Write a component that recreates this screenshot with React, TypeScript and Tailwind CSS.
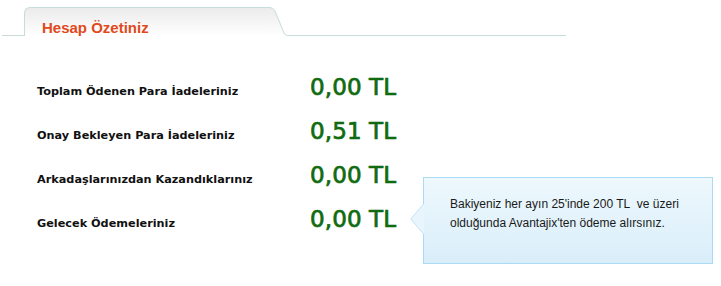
import React from "react";

const rows = [
  { label: "Toplam Ödenen Para İadeleriniz", value: "0,00 TL" },
  { label: "Onay Bekleyen Para İadeleriniz", value: "0,51 TL" },
  { label: "Arkadaşlarınızdan Kazandıklarınız", value: "0,00 TL" },
  { label: "Gelecek Ödemeleriniz", value: "0,00 TL" },
];

export default function App() {
  return (
    <div className="relative w-[721px] h-[286px] bg-white overflow-hidden">
      {/* Tab header */}
      <div className="flex h-[36px] w-[566px] items-end pl-[2px]">
        <div className="h-full w-[22px] border-b border-[#c9dcdc]" />
        <div className="h-[29px] w-[244px] border-l border-t border-[#c9dcdc] rounded-tl-[6px] bg-gradient-to-b from-[#ebebeb] to-white pl-[17px] pt-[12px]">
          <span className="block font-['Liberation_Sans',Arial,sans-serif] font-bold text-[15px] leading-[15px] text-[#e04a1c]">
            Hesap Özetiniz
          </span>
        </div>
        <svg width="20" height="29" viewBox="0 0 20 29" className="block shrink-0">
          <defs>
            <linearGradient id="tabg" x1="0" y1="0" x2="0" y2="1">
              <stop offset="0" stopColor="#ebebeb" />
              <stop offset="1" stopColor="#ffffff" />
            </linearGradient>
          </defs>
          <path d="M0,0.5 L2,0.5 Q5,0.5 7,4 L16,26 Q17,28.5 19.5,28.5 L20,28.5 L20,29 L0,29 Z" fill="url(#tabg)" />
          <path d="M0,0.5 L2,0.5 Q5,0.5 7,4 L16,26 Q17,28.5 19.5,28.5 L20,28.5" fill="none" stroke="#c9dcdc" strokeWidth="1" />
        </svg>
        <div className="h-full flex-1 border-b border-[#c9dcdc]" />
      </div>

      {/* Rows */}
      <div className="flex flex-col pt-[37px] pl-[37px]">
        {rows.map((r) => (
          <div key={r.label} className="flex h-[44px] items-baseline">
            <div className="w-[273px] font-['DejaVu_Sans',Verdana,sans-serif] font-bold text-[11.25px] leading-[14px] text-[#111111]">
              {r.label}
            </div>
            <div className="font-['DejaVu_Sans',Verdana,sans-serif] text-[23px] leading-[28px] tracking-[0.1px] [-webkit-text-stroke:0.7px_#0f6b0f] text-[#0f6b0f]">
              {r.value}
            </div>
          </div>
        ))}
      </div>

      {/* Tooltip */}
      <div className="absolute left-[423px] top-[177px] w-[290px] h-[87px] border border-[#a9dbf2] bg-gradient-to-b from-[#eef8fd] to-[#d9eefa] pl-[26px] pt-[17px]">
        <p className="font-['Liberation_Sans',Arial,sans-serif] text-[12px] leading-[19px] text-[#1a1a1a]">
          Bakiyeniz her ayın 25'inde 200 TL{"\u00a0"} ve üzeri
          <br />
          olduğunda Avantajix'ten ödeme alırsınız.
        </p>
      </div>
      <svg
        width="14"
        height="32"
        viewBox="0 0 14 32"
        className="absolute left-[410px] top-[203px]"
      >
        <path d="M14,0.5 L0.7,16 L14,31.5 Z" fill="#e8f5fc" />
        <path d="M14,0.5 L0.7,16 L14,31.5" fill="none" stroke="#bfe4f5" strokeWidth="1" />
      </svg>
    </div>
  );
}
